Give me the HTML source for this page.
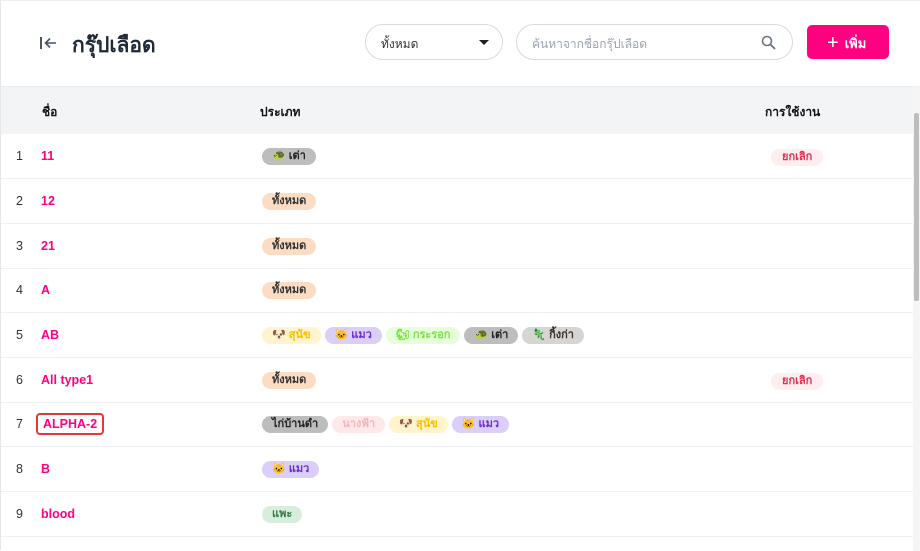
<!DOCTYPE html><html><head><meta charset="utf-8"><style>
*{box-sizing:border-box;margin:0;padding:0}
body{width:920px;height:550px;overflow:hidden;background:#fff;font-family:"Liberation Sans","Noto Sans CJK SC",sans-serif;position:relative;border-left:1px solid #e5e7eb;border-top:1px solid #eceef1}
.a{position:absolute}
.title{left:71px;top:28px;font-size:21px;font-weight:bold;color:#1f2937}
.sel{left:364px;top:23px;width:138px;height:36px;border:1px solid #d6dbe3;border-radius:18px;font-size:12px;color:#333;padding:10px 0 0 15px}
.search{left:515px;top:23px;width:277px;height:36px;border:1px solid #d6dbe3;border-radius:18px;font-size:12px;color:#9ca3af;padding:10px 0 0 15px}
.btn{left:806px;top:24px;width:82px;height:34px;background:#ff0080;border-radius:5px;color:#fff;font-size:13px;font-weight:bold;padding:8px 0 0 20px}
.thead{left:0px;top:85px;width:912px;height:48px;background:#f3f4f6;border-top:1px solid #e8eaee;font-size:12px;font-weight:bold;color:#111}
.row{left:0px;width:912px;height:45px;border-bottom:1px solid #eef0f4;font-size:12.5px}
.n{position:absolute;left:15px;top:15px;color:#333}
.nm{position:absolute;left:40px;top:15px;color:#ff0080;font-weight:bold}
.tags{position:absolute;left:261px;top:14px;display:flex;gap:4px}
.b{height:17px;border-radius:9px;font-size:11px;font-weight:bold;padding:2px 10px;line-height:13px;white-space:nowrap}
.all{background:#fddcc4;color:#333}
.t{background:#bdbdbd;color:#222}
.dog{background:#fff4cc;color:#f5c000}
.cat{background:#d9cff8;color:#6d28d9}
.sq{background:#e6ffd9;color:#7be34a}
.fr{background:#d8d4d2;color:#333}
.ng{background:#fde8ea;color:#f7b2bb}
.pe{background:#d8eedc;color:#3a7a4a}
.cancel{position:absolute;left:770px;top:15px;background:#feeef0;color:#e0304d;font-size:11px;font-weight:bold;border-radius:9px;padding:2px 11px;line-height:13px}
</style></head><body>
<div class="a" style="left:38px;top:33px"><svg width="20" height="18" viewBox="0 0 20 18"><path d="M2 3v12" stroke="#4b5563" stroke-width="2"/><path d="M17 9H7M11 4.5 6.5 9 11 13.5" stroke="#4b5563" stroke-width="1.6" fill="none"/></svg></div>
<div class="a title">กรุ๊ปเลือด</div>
<div class="a sel">ทั้งหมด<span style="position:absolute;right:13px;top:15px;border-left:5px solid transparent;border-right:5px solid transparent;border-top:5px solid #222"></span></div>
<div class="a search">ค้นหาจากชื่อกรุ๊ปเลือด<svg style="position:absolute;right:16px;top:10px" width="15" height="15" viewBox="0 0 15 15"><circle cx="6" cy="6" r="4.5" stroke="#6b7280" stroke-width="1.6" fill="none"/><path d="M9.5 9.5 14 14" stroke="#6b7280" stroke-width="1.8"/></svg></div>
<div class="a btn"><span style="font-size:20px;font-weight:normal;position:relative;top:1px;margin-right:6px;line-height:14px">+</span>เพิ่ม</div>
<div class="a thead"><span class="a" style="left:41px;top:16px">ชื่อ</span><span class="a" style="left:259px;top:16px">ประเภท</span><span class="a" style="left:764px;top:16px">การใช้งาน</span></div>
<div class="a row" style="top:133px"><span class="n">1</span><span class="nm">11</span><div class="tags"><span class="b t">🐢 เต่า</span></div><span class="cancel">ยกเลิก</span></div>
<div class="a row" style="top:178px"><span class="n">2</span><span class="nm">12</span><div class="tags"><span class="b all">ทั้งหมด</span></div></div>
<div class="a row" style="top:223px"><span class="n">3</span><span class="nm">21</span><div class="tags"><span class="b all">ทั้งหมด</span></div></div>
<div class="a row" style="top:267px"><span class="n">4</span><span class="nm">A</span><div class="tags"><span class="b all">ทั้งหมด</span></div></div>
<div class="a row" style="top:312px"><span class="n">5</span><span class="nm">AB</span><div class="tags"><span class="b dog">🐶 สุนัข</span><span class="b cat">🐱 แมว</span><span class="b sq">🐿 กระรอก</span><span class="b t">🐢 เต่า</span><span class="b fr">🦎 กิ้งก่า</span></div></div>
<div class="a row" style="top:357px"><span class="n">6</span><span class="nm">All type1</span><div class="tags"><span class="b all">ทั้งหมด</span></div><span class="cancel">ยกเลิก</span></div>
<div class="a row" style="top:401px"><span class="n">7</span><span class="nm" style="left:35px;top:11px;border:2px solid #e53935;border-radius:4px;padding:2px 5px">ALPHA-2</span><div class="tags"><span class="b t">ไก่บ้านดำ</span><span class="b ng">นางฟ้า</span><span class="b dog">🐶 สุนัข</span><span class="b cat">🐱 แมว</span></div></div>
<div class="a row" style="top:446px"><span class="n">8</span><span class="nm">B</span><div class="tags"><span class="b cat">🐱 แมว</span></div></div>
<div class="a row" style="top:491px"><span class="n">9</span><span class="nm">blood</span><div class="tags"><span class="b pe">แพะ</span></div></div>
<div class="a" style="left:912px;top:85px;width:7px;height:465px;background:#f5f5f5"></div>
<div class="a" style="left:913px;top:112px;width:5px;height:188px;background:#bdbdbd;border-radius:2px"></div>
</body></html>
